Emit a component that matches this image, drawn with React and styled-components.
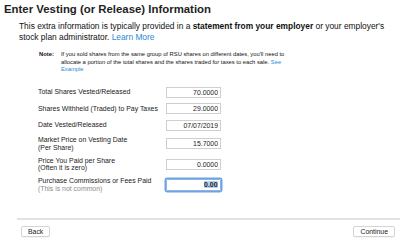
import React from 'react'
import styled, { createGlobalStyle } from 'styled-components'

const GlobalStyle = createGlobalStyle`
    html, body {
        margin: 0;
        padding: 0;
        background: #ffffff;
    }
    body {
        font-family: 'Liberation Sans', Arial, sans-serif;
        color: #111;
    }
`

const rows = [
    { label: 'Total Shares Vested/Released', value: '70.0000' },
    { label: 'Shares Withheld (Traded) to Pay Taxes', value: '29.0000' },
    { label: 'Date Vested/Released', value: '07/07/2019' },
    { label: 'Market Price on Vesting Date', sub: '(Per Share)', value: '15.7000' },
    { label: 'Price You Paid per Share', sub: '(Often it is zero)', value: '0.0000' },
    { label: 'Purchase Commissions or Fees Paid', sub: '(This is not common)', muted: true, value: '0.00', focused: true },
]

const App = () => {
    return (
        <Page>
            <GlobalStyle />
            <Title>Enter Vesting (or Release) Information</Title>
            <Intro>
                This extra information is typically provided in a <strong>statement from your employer</strong> or your employer's
                stock plan administrator. <Link href="#">Learn More</Link>
            </Intro>
            <Note>
                <NoteLabel>Note:</NoteLabel>
                <NoteText>
                    If you sold shares from the same group of RSU shares on different dates, you'll need to<br />
                    allocate a portion of the total shares and the shares traded for taxes to each sale. <Link href="#">See Example</Link>
                </NoteText>
            </Note>
            <Form>
                {rows.map((row) => (
                    <Row key={row.label}>
                        <Label>
                            {row.label}
                            {row.sub && <Sub $muted={row.muted}>{row.sub}</Sub>}
                        </Label>
                        {row.focused ? (
                            <FocusField>
                                <Selected>{row.value}</Selected>
                            </FocusField>
                        ) : (
                            <Field defaultValue={row.value} readOnly />
                        )}
                    </Row>
                ))}
            </Form>
            <Footer>
                <Button>Back</Button>
                <Button>Continue</Button>
            </Footer>
        </Page>
    )
}

export default App

const Page = styled.div`
    width: 400px;
    height: 240px;
    overflow: hidden;
    position: relative;
`

const Title = styled.h1`
    margin: 0;
    padding: 3px 0 0 4px;
    font-size: 11.4px;
    line-height: 13px;
    font-weight: bold;
    color: #222;
`

const Intro = styled.p`
    margin: 5px 0 0 19px;
    width: 381px;
    font-size: 8.4px;
    line-height: 10.5px;
    color: #111;

    strong {
        font-weight: bold;
    }
`

const Link = styled.a`
    color: #1f8ad6;
    text-decoration: none;
`

const Note = styled.div`
    display: flex;
    margin: 9px 0 0 39px;
    font-size: 5.8px;
    line-height: 7.5px;
`

const NoteLabel = styled.span`
    font-weight: bold;
    width: 22px;
    flex: none;
`

const NoteText = styled.span`
    width: 233px;
`

const Form = styled.div`
    display: flex;
    flex-direction: column;
    gap: 5.6px;
    margin: 13px 0 0 38px;
`

const Row = styled.div`
    display: flex;
    align-items: center;
`

const Label = styled.div`
    width: 128px;
    font-size: 6.9px;
    line-height: 7.5px;
    color: #1a1a1a;
`

const Sub = styled.div`
    color: ${(p) => (p.$muted ? '#8a8a8a' : '#1a1a1a')};
`

const Field = styled.input`
    box-sizing: border-box;
    width: 55px;
    height: 11px;
    margin: 0;
    padding: 0 2px;
    border: 1px solid #cfcfcf;
    border-radius: 0;
    outline: none;
    background: #fff;
    font-family: 'Liberation Sans', Arial, sans-serif;
    font-size: 6.9px;
    text-align: right;
    color: #222;
`

const FocusField = styled.div`
    box-sizing: border-box;
    width: 55px;
    height: 12px;
    padding: 0 2px;
    border: 1px solid #8ab4e6;
    box-shadow: 0 0 0 1.5px #6ea3e4;
    border-radius: 1px;
    display: flex;
    align-items: center;
    justify-content: flex-end;
    font-size: 6.9px;
    font-weight: bold;
    color: #222;
`

const Selected = styled.span`
    background: #b6d4f5;
    padding: 0 0.5px;
`

const Footer = styled.div`
    position: absolute;
    left: 17px;
    right: 0;
    top: 218px;
    border-top: 2px solid #e2e2e2;
    display: flex;
    justify-content: space-between;
    padding: 6px 5px 0 4px;
`

const Button = styled.button`
    box-sizing: border-box;
    height: 11px;
    padding: 0 6px;
    border: 1px solid #d4d4d4;
    border-radius: 2px;
    background: #fff;
    font-family: 'Liberation Sans', Arial, sans-serif;
    font-size: 6.9px;
    line-height: 9px;
    color: #222;
    box-shadow: 0 0.5px 0.5px rgba(0, 0, 0, 0.08);
`
